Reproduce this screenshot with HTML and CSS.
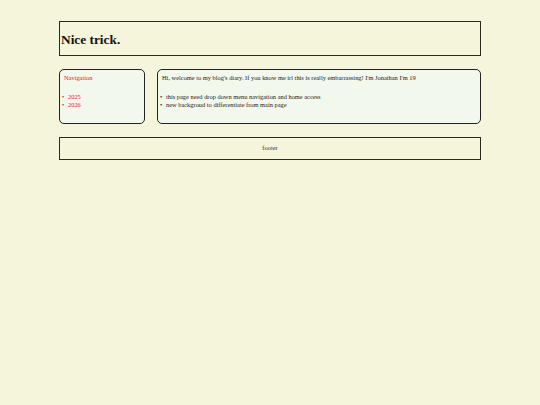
FILE: index.html
```html
<!DOCTYPE html>
<html>
<head>
<meta charset="utf-8">
<title>Nice trick.</title>
<link rel="stylesheet" href="styles.css">
</head>
<body>
<div class="page">
  <header class="site-header">
    <h1>Nice trick.</h1>
  </header>
  <div class="row">
    <nav class="box nav">
      <p class="nav-title">Navigation</p>
      <ul class="list">
        <li>2025</li>
        <li>2026</li>
      </ul>
    </nav>
    <main class="box content">
      <p class="intro">Hi, welcome to my blog's diary. If you know me irl this is really embarrassing! I'm Jonathan I'm 19</p>
      <ul class="list">
        <li>this page need drop down menu navigation and home access</li>
        <li>new backgroud to differentiate from main page</li>
      </ul>
    </main>
  </div>
  <footer class="site-footer">footer</footer>
</div>
</body>
</html>
```

FILE: styles.css
```css
html, body {
  margin: 0;
  padding: 0;
  background: #f5f5dc;
}

body {
  font-family: "Liberation Serif", "Times New Roman", serif;
  font-size: 6.4px;
  line-height: 8px;
  color: #222;
}

.page {
  width: 422px;
  margin: 0 auto;
  padding-top: 21px;
  display: flex;
  flex-direction: column;
  gap: 13px;
}

.site-header {
  border: 1px solid #2a2a22;
  padding: 0 1px;
}

.site-header h1 {
  margin: 11px 0 8px;
  font-size: 13.33px;
  line-height: 14px;
  font-weight: bold;
  color: #111;
}

.row {
  display: flex;
  gap: 12px;
  height: 55px;
}

.box {
  box-sizing: border-box;
  border: 1px solid #222;
  border-radius: 5px;
  background: #f3f8ec;
  padding: 4px 4px;
}

.nav {
  width: 86px;
  flex: none;
  color: #e62020;
}

.content {
  flex: 1;
}

.nav-title,
.intro {
  margin: 0 0 11px;
}

.list {
  margin: 0;
  padding-left: 4px;
  list-style: none;
}

.list li::before {
  content: "\2022";
  display: inline-block;
  width: 6px;
  margin-left: -6px;
}

.site-footer {
  border: 1px solid #2a2a22;
  text-align: center;
  padding: 6px 0 7px;
  color: #333;
}
```
